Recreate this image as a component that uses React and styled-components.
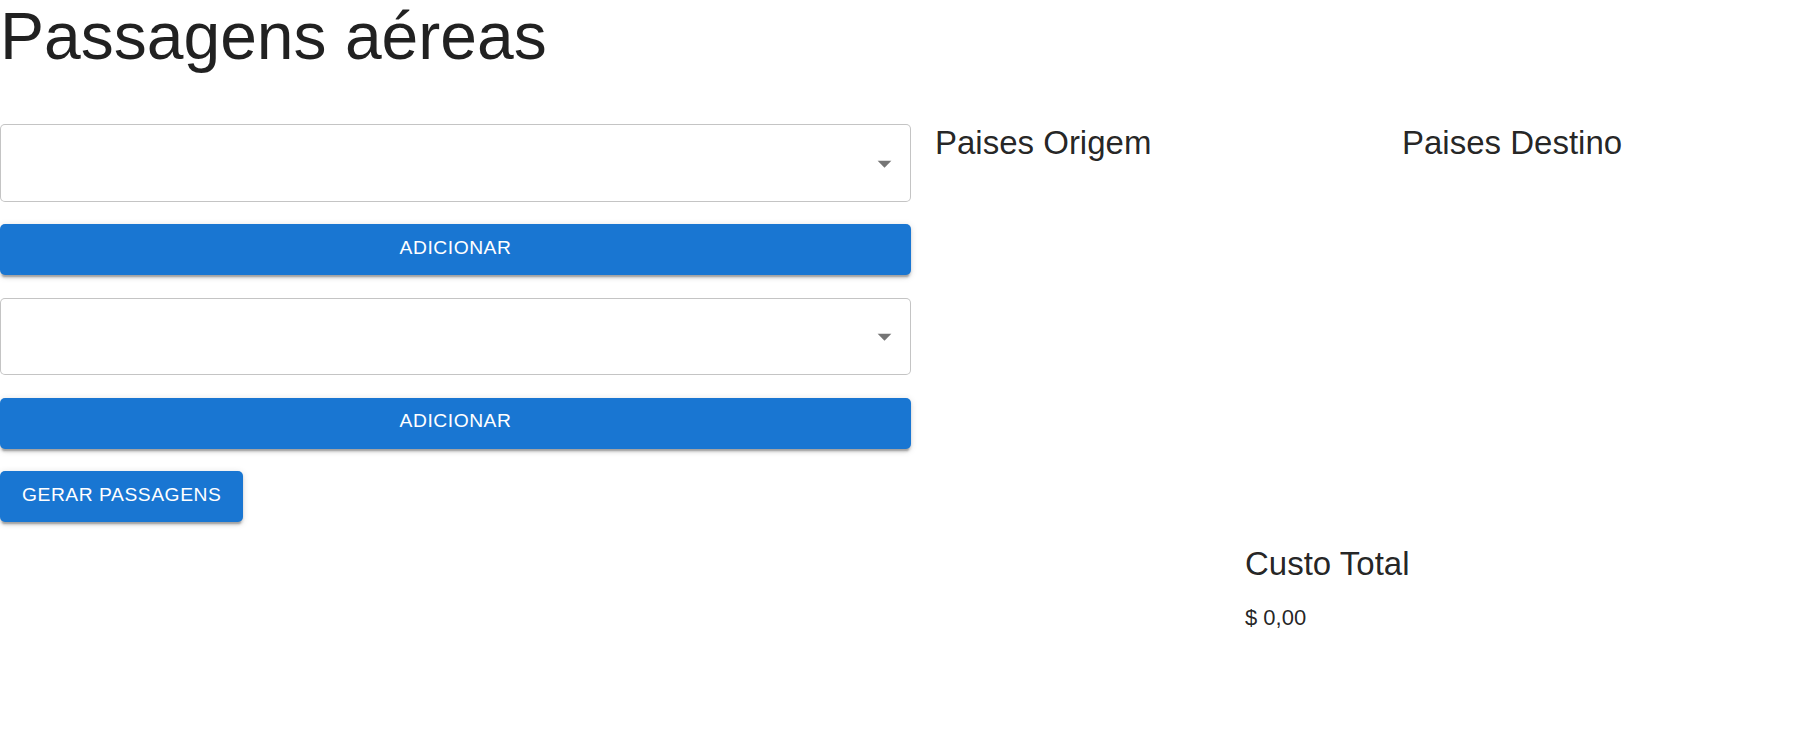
import React, { useState } from 'react';
import styled, { createGlobalStyle } from 'styled-components';

const GlobalStyle = createGlobalStyle`
  body {
    margin: 0;
    background: #ffffff;
    font-family: "Liberation Sans", Arial, sans-serif;
    color: rgba(0, 0, 0, 0.87);
  }
`;

const Page = styled.div`
  width: 1820px;
`;

const Title = styled.h1`
  margin: 0 0 52px;
  font-size: 66px;
  font-weight: 400;
  line-height: 72px;
`;

const Main = styled.div`
  display: grid;
  grid-template-columns: 911px 467px 1fr;
  align-items: start;
`;

const Controls = styled.div`
  display: flex;
  flex-direction: column;
  align-items: flex-start;
  gap: 22.5px;
`;

const SelectBox = styled.div`
  position: relative;
  box-sizing: border-box;
  width: 911px;
  height: 77.5px;
  border: 1px solid rgba(0, 0, 0, 0.23);
  border-radius: 5px;
  background: #ffffff;
  cursor: pointer;
`;

const Arrow = styled.svg`
  position: absolute;
  right: 9px;
  top: 50%;
  width: 33px;
  height: 33px;
  margin-top: -16px;
  fill: rgba(0, 0, 0, 0.54);
`;

const Button = styled.button`
  box-sizing: border-box;
  display: flex;
  align-items: center;
  justify-content: center;
  width: ${(p) => (p.$full ? '911px' : 'auto')};
  height: 51px;
  padding: 0 22px 4px;
  border: none;
  border-radius: 5px;
  background: #1976d2;
  color: #ffffff;
  font-family: "Liberation Sans", Arial, sans-serif;
  font-size: 19.25px;
  font-weight: 400;
  letter-spacing: 0.55px;
  text-transform: uppercase;
  cursor: pointer;
  box-shadow: 0 4px 1.5px -2.75px rgba(0, 0, 0, 0.2),
    0 2.75px 2.75px 0 rgba(0, 0, 0, 0.14),
    0 1.4px 7px 0 rgba(0, 0, 0, 0.12);

  &:hover {
    background: #1565c0;
  }
`;

const ListColumn = styled.div`
  padding-top: 1px;
  padding-left: ${(p) => p.$indent}px;
`;

const Heading = styled.h5`
  margin: 0;
  font-size: 33px;
  font-weight: 400;
  line-height: 36px;
`;

const Total = styled.div`
  margin: 24px 0 0 1245px;
`;

const Amount = styled.p`
  margin: 19px 0 0;
  font-size: 22px;
  line-height: 33px;
`;

const CountrySelect = ({ value, onClick }) => (
  <SelectBox onClick={onClick}>
    {value}
    <Arrow viewBox="0 0 24 24">
      <path d="M7 10l5 5 5-5z" />
    </Arrow>
  </SelectBox>
);

const App = () => {
  const [origens, setOrigens] = useState([]);
  const [destinos, setDestinos] = useState([]);
  const [total] = useState(0);

  return (
    <Page>
      <GlobalStyle />
      <Title>Passagens aéreas</Title>
      <Main>
        <Controls>
          <CountrySelect />
          <Button $full onClick={() => setOrigens([...origens])}>Adicionar</Button>
          <CountrySelect />
          <Button $full onClick={() => setDestinos([...destinos])}>Adicionar</Button>
          <Button>Gerar passagens</Button>
        </Controls>
        <ListColumn $indent={24}>
          <Heading>Paises Origem</Heading>
        </ListColumn>
        <ListColumn $indent={24}>
          <Heading>Paises Destino</Heading>
        </ListColumn>
      </Main>
      <Total>
        <Heading>Custo Total</Heading>
        <Amount>$ {total.toFixed(2).replace('.', ',')}</Amount>
      </Total>
    </Page>
  );
};

export default App;
